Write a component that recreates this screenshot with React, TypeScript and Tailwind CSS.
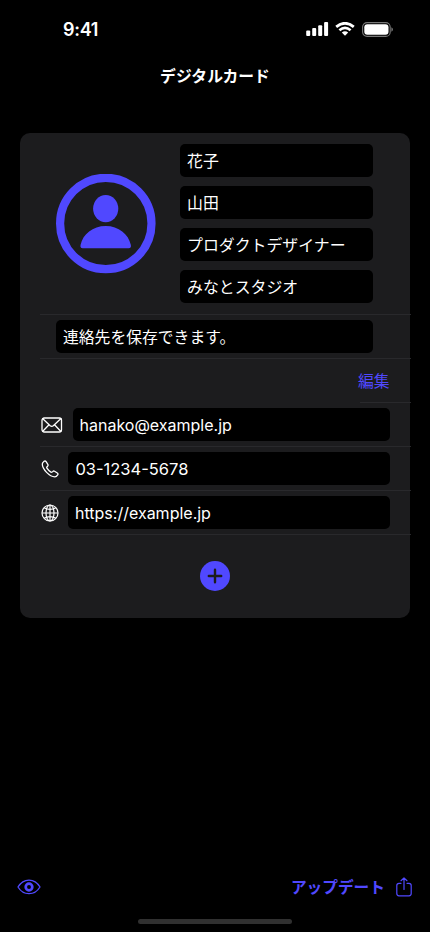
import { useState } from 'react';

const fontClass = "font-[Inter,'Noto_Sans_CJK_JP',sans-serif]";

function StatusBar() {
  return (
    <header className="flex h-[58px] items-center justify-between pl-[63px] pr-[37.5px]">
      <span className="pt-px text-[18px] font-semibold leading-none tracking-[-0.3px]">9:41</span>
      <div className="flex items-center">
        <svg width="23" height="14" viewBox="0 0 23 14" fill="white">
          <rect x="0.2" y="8.5" width="4" height="5.5" rx="1" />
          <rect x="6.2" y="6" width="4" height="8" rx="1" />
          <rect x="12.2" y="3.2" width="4" height="10.8" rx="1" />
          <rect x="18.1" y="0" width="4" height="14" rx="1" />
        </svg>
        <svg className="ml-1.5" width="20" height="14" viewBox="0 0 20 14" fill="none" stroke="white">
          <path d="M1.2 4.9Q10 -2.3 18.8 4.9" strokeWidth="2.8" />
          <path d="M4.4 8.3Q10 3.5 15.6 8.3" strokeWidth="2.6" />
          <path d="M6.8 10.6Q10 8 13.2 10.6L10 13.8Z" fill="white" stroke="none" />
        </svg>
        <svg className="ml-[7px]" width="31" height="15" viewBox="0 0 31 15" fill="none">
          <rect x="0.6" y="0.6" width="27.6" height="13.8" rx="4.5" stroke="#777" strokeWidth="1.1" />
          <rect x="2.3" y="2.3" width="24.2" height="10.4" rx="3" fill="white" />
          <path d="M29.4 5.2Q31 6 31 7.5T29.4 9.8Z" fill="#777" />
        </svg>
      </div>
    </header>
  );
}

function Avatar() {
  return (
    <svg width="100" height="100" viewBox="0 0 100 100" fill="#5048ff">
      <circle cx="49.8" cy="49.5" r="45.7" fill="none" stroke="#5048ff" strokeWidth="8.2" />
      <ellipse cx="49.7" cy="34.6" rx="12.6" ry="13.7" />
      <path d="M26.7 74.2C24.7 74.2 24.1 72.7 24.6 70.7C26.9 60.2 36.7 52 49.7 52S72.5 60.2 74.8 70.7C75.3 72.7 74.7 74.2 72.7 74.2Z" />
    </svg>
  );
}

function MailIcon() {
  return (
    <svg width="22" height="16" viewBox="0 0 22 16" fill="none" stroke="white" strokeWidth="1.3" strokeLinecap="round" strokeLinejoin="round">
      <rect x="1" y="1" width="19.5" height="14" rx="2.2" />
      <path d="M1.8 1.8L9.2 8.8Q10.75 10 12.3 8.8L19.7 1.8M1.8 14.2L8 7.8M19.7 14.2L13.5 7.8" />
    </svg>
  );
}

function PhoneIcon() {
  return (
    <svg width="18" height="18" viewBox="0 0 18 18" fill="none" stroke="white" strokeWidth="1.3" strokeLinecap="round" strokeLinejoin="round">
      <path d="M1.3 4.1C1.3 3 2.2 2 3.1 1.3C3.8 0.8 4.6 1 5.1 1.7L6.8 4.3C7.2 5 7.1 5.6 6.6 6.2L5.9 7C5.6 7.4 5.6 7.7 5.9 8.1C6.9 9.6 8.4 11.1 9.9 12.1C10.3 12.4 10.7 12.4 11.1 12.1L11.9 11.4C12.4 10.9 13 10.9 13.6 11.3L16.3 13C17 13.5 17.2 14.2 16.7 14.9C16 15.9 15 16.8 13.8 16.8C11.3 16.8 7.9 14.8 5.6 12.4C3.2 10 1.3 6.6 1.3 4.1Z" />
    </svg>
  );
}

function GlobeIcon() {
  return (
    <svg width="18" height="18" viewBox="0 0 18 18" fill="none" stroke="white" strokeWidth="1.2">
      <circle cx="9" cy="9" r="8" />
      <ellipse cx="9" cy="9" rx="4" ry="8" />
      <path d="M9 1V17M1 9H17M3 3.8Q9 7 15 3.8M3 14.2Q9 11 15 14.2" />
    </svg>
  );
}

function EyeIcon() {
  return (
    <svg width="24" height="16" viewBox="0 0 24 16" fill="none" stroke="#5048ff">
      <path d="M1 8C2.8 5 7 1.1 12 1.1S21.2 5 23 8C21.2 11 17 14.7 12 14.7S2.8 11 1 8Z" strokeWidth="1.3" />
      <circle cx="12" cy="8" r="3.3" strokeWidth="2.7" />
    </svg>
  );
}

function ShareIcon() {
  return (
    <svg width="16" height="20" viewBox="0 0 16 20" fill="none" stroke="#5048ff" strokeWidth="1.2" strokeLinecap="round" strokeLinejoin="round">
      <path d="M5 6.3H3C1.6 6.3 0.8 7.1 0.8 8.5V16.6C0.8 18 1.6 18.8 3 18.8H13C14.4 18.8 15.2 18 15.2 16.6V8.5C15.2 7.1 14.4 6.3 13 6.3H11" />
      <path d="M8 12.4V1M5 3.7L8 0.9L11 3.7" />
    </svg>
  );
}

const inputClass = 'block h-[33px] min-w-0 rounded-[5px] bg-black px-[7px] text-white outline-none';

export default function App() {
  const [profile, setProfile] = useState(['花子', '山田', 'プロダクトデザイナー', 'みなとスタジオ']);
  const [note, setNote] = useState('連絡先を保存できます。');
  const [email, setEmail] = useState('hanako@example.jp');
  const [phone, setPhone] = useState('03-1234-5678');
  const [url, setUrl] = useState('https://example.jp');

  const handleProfile = (value: string, index: number) => {
    setProfile(profile.map((p, i) => (i === index ? value : p)));
  };

  return (
    <div className={`${fontClass} flex h-[932px] w-[430px] flex-col overflow-hidden bg-black text-white`}>
      <StatusBar />
      <h1 className="flex h-[35px] items-center justify-center pt-0.5 text-[15.8px] font-bold">デジタルカード</h1>

      <main className="mx-5 mt-10 h-[485px] rounded-[10px] bg-[#1c1c1e] pl-5">
        <section className="flex h-[182px] border-b border-[#29292c] pl-4 pt-[11px] -mr-px">
          <div className="mt-[29.5px] w-[124px]">
            <Avatar />
          </div>
          <div className="flex flex-col gap-[9px]">
            {profile.map((value, index) => (
              <input
                key={index}
                value={value}
                onChange={(e) => handleProfile(e.target.value, index)}
                className={`${inputClass} w-[193.4px] text-[15.9px]`}
              />
            ))}
          </div>
        </section>

        <section className="-mr-px h-11 border-b border-[#29292c] pl-4 pt-[5px]">
          <input
            value={note}
            onChange={(e) => setNote(e.target.value)}
            className={`${inputClass} w-[317.4px] text-[15.8px]`}
          />
        </section>

        <div className="-mr-px flex h-11 justify-end">
          <button className="flex w-[51px] items-center border-b border-[#29292c] pt-[3px] text-[15.8px] text-[#5048ff]">
            <span className="-ml-0.5 whitespace-nowrap">編集</span>
          </button>
        </div>

        <section className="-mr-px">
          <div className="flex h-11 items-center border-b border-[#29292c] pl-px pr-[21.5px]">
            <MailIcon />
            <input
              value={email}
              onChange={(e) => setEmail(e.target.value)}
              className={`${inputClass} ml-[9.5px] flex-1 text-[16px]`}
            />
          </div>
          <div className="flex h-11 items-center border-b border-[#29292c] pl-px pr-[21.5px]">
            <PhoneIcon />
            <input
              value={phone}
              onChange={(e) => setPhone(e.target.value)}
              className={`${inputClass} ml-[9.4px] flex-1 text-[16.5px]`}
            />
          </div>
          <div className="flex h-11 items-center border-b border-[#29292c] pl-px pr-[21.5px]">
            <GlobeIcon />
            <input
              value={url}
              onChange={(e) => setUrl(e.target.value)}
              className={`${inputClass} ml-[9px] flex-1 text-[16px]`}
            />
          </div>
        </section>

        <div className="flex justify-center pr-5 pt-[26px]">
          <button aria-label="追加">
            <svg width="30" height="30" viewBox="0 0 30 30">
              <circle cx="15" cy="15" r="15" fill="#5048ff" />
              <path d="M15 8.8V21.2M8.8 15H21.2" stroke="#1c1c1e" strokeWidth="2.4" strokeLinecap="round" />
            </svg>
          </button>
        </div>
      </main>

      <footer className="mt-auto">
        <div className="flex h-8 items-center justify-between pl-[17px] pr-[18px]">
          <EyeIcon />
          <div className="flex items-center text-[#5048ff]">
            <button className="pt-0.5 text-[15.7px] font-bold">アップデート</button>
            <span className="ml-[11px] pt-px">
              <ShareIcon />
            </span>
          </div>
        </div>
        <div className="mx-auto mb-2 mt-4 h-[5px] w-[154px] rounded-full bg-[#303030]" />
      </footer>
    </div>
  );
}
